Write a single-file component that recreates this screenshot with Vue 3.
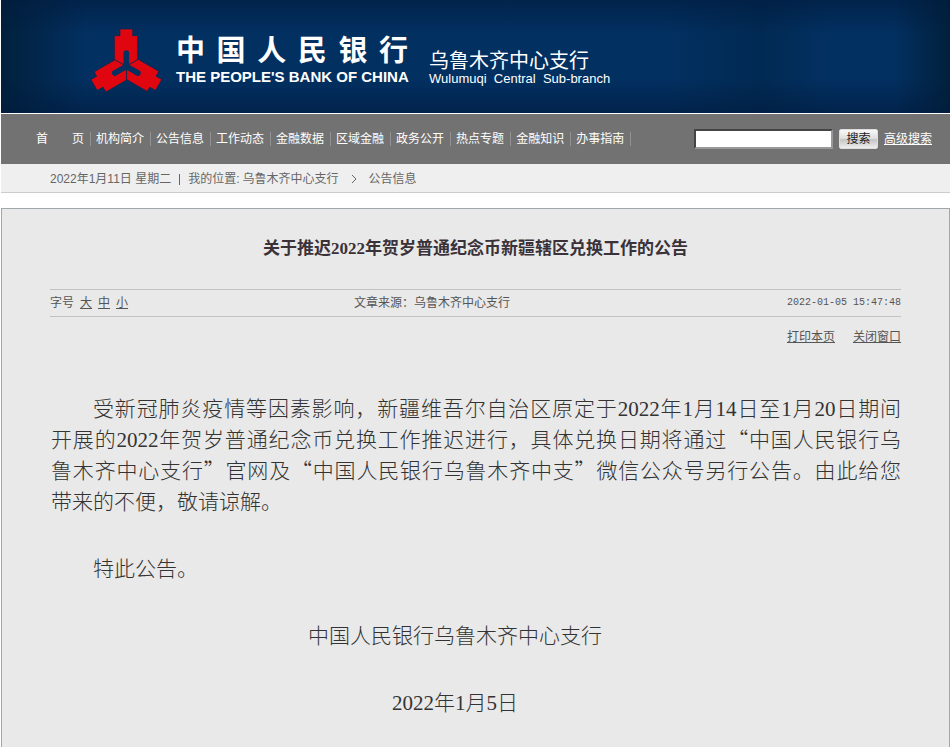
<script setup>
const navItems = [
  '首　　页',
  '机构简介',
  '公告信息',
  '工作动态',
  '金融数据',
  '区域金融',
  '政务公开',
  '热点专题',
  '金融知识',
  '办事指南'
];

const fontSizes = ['大', '中', '小'];

// The emblem is one arm repeated around its centre
const armAngles = [0, 120, 240];
</script>

<template>
  <div class="page" lang="zh-CN">
    <header class="banner">
      <svg class="emblem" viewBox="0 0 240 222" aria-hidden="true">
        <g v-for="angle in armAngles" :key="angle" :transform="`rotate(${angle} 121 130)`">
          <path
            d="M102 18H140V38H155V110L121 130L85 110V38H102Z"
            fill="#e0060f"
            stroke="#06264f"
            stroke-width="2"
          />
        </g>
        <path
          v-for="angle in armAngles"
          :key="angle"
          :transform="`rotate(${angle} 121 130)`"
          d="M121 130V90"
          stroke="#06305f"
          stroke-width="17"
          stroke-linecap="round"
        />
      </svg>
      <div class="brand">
        <div class="brand-cn">中国人民银行</div>
        <div class="brand-en">THE PEOPLE'S BANK OF CHINA</div>
      </div>
      <div class="branch">
        <div class="branch-cn">乌鲁木齐中心支行</div>
        <div class="branch-en">Wulumuqi&nbsp; Central&nbsp; Sub-branch</div>
      </div>
    </header>

    <div class="toolbar">
      <nav>
        <ul class="nav-list">
          <li v-for="item in navItems" :key="item">
            <a href="#">{{ item }}</a>
          </li>
        </ul>
      </nav>
      <form class="search" @submit.prevent>
        <input type="text" aria-label="搜索" />
        <button type="submit">搜索</button>
        <a href="#">高级搜索</a>
      </form>
    </div>

    <div class="crumbs">
      <span>2022年1月11日 星期二</span>
      <span class="crumb-bar"></span>
      <span>我的位置:</span>
      <a class="crumb-site" href="#">乌鲁木齐中心支行</a>
      <svg class="crumb-arrow" viewBox="0 0 6 10" aria-hidden="true">
        <path d="M1 1L5 5L1 9" fill="none" stroke="#666" />
      </svg>
      <a href="#">公告信息</a>
    </div>

    <main class="panel">
      <h1>关于推迟2022年贺岁普通纪念币新疆辖区兑换工作的公告</h1>
      <div class="meta">
        <div class="sizes">
          字号
          <a v-for="size in fontSizes" :key="size" href="#">{{ size }}</a>
        </div>
        <div>文章来源：乌鲁木齐中心支行</div>
        <time>2022-01-05 15:47:48</time>
      </div>
      <div class="actions">
        <a href="#">打印本页</a>
        <a href="#">关闭窗口</a>
      </div>
      <article>
        <p>
          <span class="line first">受新冠肺炎疫情等因素影响，新疆维吾尔自治区原定于2022年1月14日至1月20日期间</span>
          <span class="line">开展的2022年贺岁普通纪念币兑换工作推迟进行，具体兑换日期将通过<i>“</i>中国人民银行乌</span>
          <span class="line">鲁木齐中心支行<i>”</i>官网及<i>“</i>中国人民银行乌鲁木齐中支<i>”</i>微信公众号另行公告。由此给您</span>
          <span class="line last">带来的不便，敬请谅解。</span>
        </p>
        <p><span class="line first last">特此公告。</span></p>
        <p class="sign">中国人民银行乌鲁木齐中心支行</p>
        <p class="sign">2022年1月5日</p>
      </article>
    </main>
  </div>
</template>

<style>
body {
  margin: 0;
  background: #fff;
}
</style>

<style scoped>
.page {
  display: flex;
  flex-direction: column;
  min-height: 100vh;
  margin: 0 1px;
  font: 12px/16px "Liberation Sans", "Noto Sans CJK SC", sans-serif;
  color: #555;
}

a {
  color: inherit;
}

.banner {
  display: flex;
  align-items: center;
  box-sizing: border-box;
  height: 113px;
  padding: 6px 0 0 85px;
  color: #fff;
  background:
    linear-gradient(#011b3d99, #02306000 30%, #02306000 70%, #011b3d99),
    linear-gradient(90deg, #011c33cc, #02306000 9%, #02306000 70%, #01284fcc 80%, #02306000 87%, #02306000 94%, #011c33cc),
    #023061;
}

.emblem {
  width: 80px;
  height: 74px;
  flex-shrink: 0;
}

.brand {
  width: 232px;
  margin-left: 10px;
}

.brand-cn {
  font-size: 29px;
  line-height: 34px;
  font-weight: bold;
  text-align-last: justify;
}

.brand-en {
  font-size: 15px;
  line-height: 18px;
  font-weight: bold;
  white-space: nowrap;
}

.branch {
  margin: 18px 0 0 21px;
}

.branch-cn {
  font-size: 20px;
  line-height: 20px;
}

.branch-en {
  font-size: 13px;
  line-height: 16px;
}

.toolbar {
  display: flex;
  align-items: center;
  justify-content: space-between;
  height: 50px;
  margin-top: 1px;
  padding: 0 18px 0 30px;
  color: #fff;
  background: #727272;
}

.nav-list {
  display: flex;
  margin: 0;
  padding: 0;
  list-style: none;
}

.nav-list li {
  padding: 0 6px 0 5px;
  border-right: 1px solid #929292;
  line-height: 14px;
  white-space: nowrap;
}

.nav-list a,
.crumbs a {
  text-decoration: none;
}

.search {
  display: flex;
  align-items: center;
  gap: 6px;
}

.search input {
  box-sizing: border-box;
  width: 139px;
  height: 20px;
  border: 2px solid;
  border-color: #444 #999 #999 #444;
  background: #fff;
}

.search button {
  width: 39px;
  height: 20px;
  padding: 0;
  border: 1px solid #ddd;
  border-radius: 2px;
  font: inherit;
  color: #222;
  background: linear-gradient(#f8f8f8, #ddd 50%, #c4c4c4 52%, #eee);
}

.crumbs {
  display: flex;
  align-items: center;
  box-sizing: border-box;
  height: 29px;
  padding: 2px 0 0 49px;
  color: #666;
  background: #efefef;
  border-bottom: 1px solid #ccc;
}

.crumb-bar {
  height: 11px;
  margin: 0 8px;
  border-left: 1px solid #666;
}

.crumb-site {
  margin-left: 3px;
}

.crumb-arrow {
  width: 6px;
  height: 10px;
  margin: 0 12px;
}

.panel {
  flex: 1;
  margin-top: 15px;
  padding: 28px 48px 0;
  border: 1px solid #9fa9ab;
  border-bottom: 0;
  background: #e9e9e9;
}

h1 {
  margin: 0 0 28px;
  font: bold 17px/24px "Liberation Serif", "Noto Sans CJK SC", serif;
  color: #3a3238;
  text-align: center;
}

.meta {
  display: grid;
  grid-template-columns: 5fr 6fr 3fr;
  align-items: center;
  height: 26px;
  border: solid #c2c2c2;
  border-width: 1px 0;
}

.sizes {
  display: flex;
  gap: 6px;
}

time {
  font: 10px/16px "Liberation Mono", monospace;
  text-align: right;
}

.actions {
  display: flex;
  justify-content: flex-end;
  gap: 18px;
  margin-top: 12px;
}

article {
  padding: 49px 0 0 1px;
  font: 21px/31px "Liberation Serif", "Noto Sans CJK SC", serif;
  font-weight: 300;
  color: #333;
}

article p {
  margin: 0 0 36px;
}

article p:last-child {
  margin-bottom: 16px;
}

.line {
  display: block;
  text-align-last: justify;
  white-space: nowrap;
}

.first {
  text-indent: 2em;
}

.last {
  text-align-last: left;
}

.line i {
  font-family: "Noto Sans CJK SC", sans-serif;
  font-style: normal;
  line-height: 1;
}

.sign {
  padding-right: 42px;
  text-align: center;
}
</style>
